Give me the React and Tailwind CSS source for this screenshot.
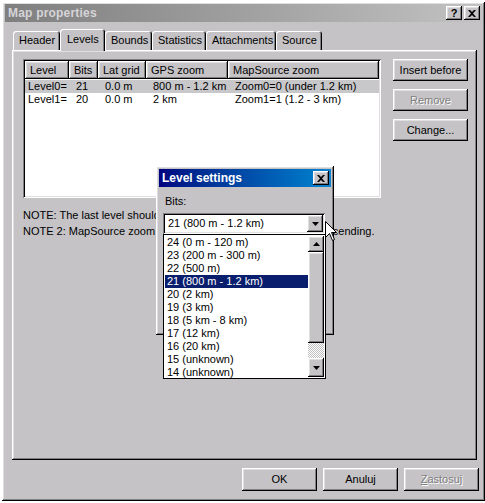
import React from 'react';

const FONT = "font-['Liberation_Sans',Arial,sans-serif]";
const RAISED = 'shadow-[inset_-1px_-1px_#000,inset_1px_1px_#fff,inset_-2px_-2px_#808080,inset_2px_2px_#dfdfdf]';
const SUNKEN = 'shadow-[inset_1px_1px_#808080,inset_-1px_-1px_#fff,inset_2px_2px_#000,inset_-2px_-2px_#dfdfdf]';
const BG = 'bg-[#c5c3c6]';

const TABS = [
  { t: 'Header', w: 47 },
  { t: 'Levels', w: 45, on: true },
  { t: 'Bounds', w: 47 },
  { t: 'Statistics', w: 54 },
  { t: 'Attachments', w: 70 },
  { t: 'Source', w: 46 },
];

const COLS = [
  { t: 'Level', w: 44 },
  { t: 'Bits', w: 29 },
  { t: 'Lat grid', w: 48 },
  { t: 'GPS zoom', w: 82 },
  { t: 'MapSource zoom', w: 151 },
];

const ROWS = [
  ['Level0=', '21', '0.0 m', '800 m - 1.2 km', 'Zoom0=0 (under 1.2 km)'],
  ['Level1=', '20', '0.0 m', '2 km', 'Zoom1=1 (1.2 - 3 km)'],
];

const BITS = [
  '24 (0 m - 120 m)', '23 (200 m - 300 m)', '22 (500 m)', '21 (800 m - 1.2 km)', '20 (2 km)',
  '19 (3 km)', '18 (5 km - 8 km)', '17 (12 km)', '16 (20 km)', '15 (unknown)', '14 (unknown)',
];

function Arrow({ up }) {
  return (
    <svg width="7" height="4" viewBox="0 0 7 4">
      <path d={up ? 'M3.5 0L7 4H0Z' : 'M0 0H7L3.5 4Z'} fill="#000" />
    </svg>
  );
}

function XGlyph() {
  return (
    <svg width="8" height="7" viewBox="0 0 8 7">
      <path d="M0 0h2l2 2 2-2h2L5 3.5 8 7H6L4 5 2 7H0l3-3.5z" fill="#000" />
    </svg>
  );
}

function Btn({ children, disabled, className = '' }) {
  return (
    <div className={`${RAISED} ${BG} flex items-center justify-center text-[11px] ${disabled ? 'text-[#808080] [text-shadow:1px_1px_0_#fff]' : 'text-black'} ${className}`}>
      {children}
    </div>
  );
}

export default function App() {
  return (
    <div className={`relative w-[485px] h-[503px] overflow-hidden bg-white ${FONT}`}>
      {/* main window */}
      <div className={`ml-[2px] mt-[2px] w-[483px] h-[499px] pt-[2px] px-[3px] ${BG} ${RAISED}`}>
        <div className="h-[18px] flex items-center pl-[3px] pr-[2px] bg-gradient-to-r from-[#7f7f7f] to-[#c2c2c2]">
          <span className="text-[12px] font-bold text-[#d6d4d8] tracking-[0.2px]">Map properties</span>
          <div className="ml-auto flex gap-[2px]">
            <Btn className="w-[16px] h-[14px] !text-[11px] font-bold">?</Btn>
            <Btn className="w-[16px] h-[14px]"><XGlyph /></Btn>
          </div>
        </div>

        {/* tabs */}
        <div className="mt-[7px] ml-[8px] flex items-end h-[21px] relative z-10">
          {TABS.map(x => (
            <div
              key={x.t}
              style={{ width: x.w }}
              className={`${BG} rounded-t-[3px] text-[11px] text-black pl-[6px] flex items-center shadow-[inset_1px_1px_#fff,inset_-1px_0_#000,inset_-2px_0_#808080] ${x.on ? 'h-[22px] mb-[-1px] pl-[7px] pb-[2px]' : 'h-[19px]'}`}
            >
              {x.t}
            </div>
          ))}
        </div>

        {/* tab page */}
        <div className={`ml-[7px] w-[465px] h-[410px] ${BG} ${RAISED} pt-[9px] pl-[11px]`}>
          <div className="flex gap-[12px]">
            <div className={`w-[358px] h-[139px] bg-white ${SUNKEN} p-[2px]`}>
              <div className="flex h-[18px]">
                {COLS.map(c => (
                  <div key={c.t} style={{ width: c.w }} className={`${BG} ${RAISED} text-[11px] pl-[5px] flex items-center shrink-0`}>{c.t}</div>
                ))}
              </div>
              <div className="mt-[1px]">
                {ROWS.map((r, i) => (
                  <div key={r[0]} className={`flex h-[13px] text-[11px] leading-[13px] ${i === 0 ? 'bg-[#c8c7ca]' : ''}`}>
                    {r.map((v, j) => (
                      <div key={j} style={{ width: COLS[j].w }} className={`shrink-0 ${j === 0 ? 'pl-[3px]' : 'pl-[7px]'} whitespace-nowrap`}>{v}</div>
                    ))}
                  </div>
                ))}
              </div>
            </div>
            <div className="flex flex-col gap-[8px]">
              <Btn className="w-[75px] h-[22px]">Insert before</Btn>
              <Btn disabled className="w-[75px] h-[22px]">Remove</Btn>
              <Btn className="w-[75px] h-[22px]">Change...</Btn>
            </div>
          </div>
          <div className="mt-[9px] text-[11px] leading-[16px] text-black whitespace-nowrap">
            <div>NOTE: The last level should be empty.</div>
            <div>NOTE 2: MapSource zoom 'ZoomN' values in levels must be ascending.</div>
          </div>
        </div>

        {/* bottom buttons */}
        <div className="mt-[8px] flex justify-end gap-[6px] pr-[3px]">
          <Btn className="w-[75px] h-[23px]">OK</Btn>
          <Btn className="w-[75px] h-[23px]">Anuluj</Btn>
          <Btn disabled className="w-[75px] h-[23px]"><span><span className="underline">Z</span>astosuj</span></Btn>
        </div>
      </div>

      {/* Level settings dialog */}
      <div className={`absolute left-[156px] top-[166px] w-[178px] h-[169px] p-[3px] ${BG} ${RAISED}`}>
        <div className="h-[18px] flex items-center pl-[3px] pr-[2px] bg-gradient-to-r from-[#000080] to-[#1084d0]">
          <span className="text-[12px] font-bold text-white">Level settings</span>
          <Btn className="ml-auto w-[16px] h-[14px]"><XGlyph /></Btn>
        </div>
        <div className="pl-[6px] mt-[8px] text-[11px] leading-[13px]">Bits:</div>
        <div className={`ml-[4px] mt-[5px] w-[162px] h-[21px] bg-white ${SUNKEN} p-[2px] flex items-center`}>
          <span className="pl-[3px] text-[11px]">21 (800 m - 1.2 km)</span>
          <Btn className="ml-auto w-[16px] h-[17px]"><Arrow /></Btn>
        </div>
      </div>

      {/* dropdown list */}
      <div className="absolute left-[163px] top-[234px] w-[163px] h-[145px] bg-white border border-black flex p-[1px]">
        <div className="flex-1">
          {BITS.map((b, i) => (
            <div key={b} className={`h-[13px] leading-[13px] text-[11px] pl-[2px] whitespace-nowrap ${i === 3 ? 'bg-[#0a1e6e] text-white' : 'text-black'}`}>{b}</div>
          ))}
        </div>
        <div className="w-[16px] flex flex-col">
          <Btn className="h-[16px]"><Arrow up /></Btn>
          <Btn className="h-[91px]" />
          <div className="flex-1 bg-[repeating-conic-gradient(#c0c0c0_0%_25%,#fff_0%_50%)] bg-size-[2px_2px]" />
          <Btn className="h-[19px]"><Arrow /></Btn>
        </div>
      </div>

      {/* mouse cursor */}
      <svg className="absolute left-[325px] top-[221px]" width="13" height="21" viewBox="0 0 13 21">
        <path d="M0.5 0.5V16.5L4.5 12.5L7.5 19.5L9.5 18.5L6.5 11.5H11.5Z" fill="#fff" stroke="#000" strokeWidth="1" />
      </svg>
    </div>
  );
}
